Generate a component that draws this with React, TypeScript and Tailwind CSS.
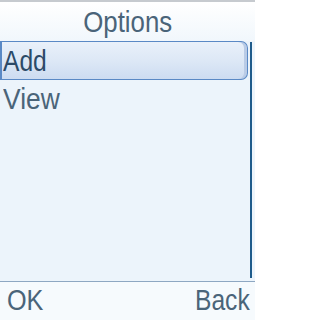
export default function App() {
  return (
    <div
      className="flex h-[320px] w-[255px] flex-col overflow-hidden bg-[#ecf4fb] text-[30px] leading-none"
      style={{ fontFamily: '"Liberation Sans", Arial, sans-serif' }}
    >
      <div className="h-[2px] bg-[#c6cacf]" />
      <div className="flex h-[39px] items-center justify-center bg-gradient-to-b from-[#ffffff] to-[#f1f7fc] text-[#4a6479]">
        <span className="inline-block origin-center scale-x-[0.86]">Options</span>
      </div>

      <div className="flex flex-1">
        <div className="flex flex-1 flex-col">
          <div className="flex h-[39px] items-center rounded-r-[7px] border border-l-2 border-[#5a89c5] bg-gradient-to-b from-[#e9f1fa] via-[#dde8f6] to-[#cddcf1] pl-[1px] text-[#2c4a68] shadow-[inset_-3px_0_0_#b9cbe6]">
            <span className="inline-block origin-left scale-x-[0.82]">Add</span>
          </div>
          <div className="flex h-[38px] items-center pl-[3px] text-[#4a6479]">
            <span className="inline-block origin-left scale-x-[0.88]">View</span>
          </div>
        </div>
        <div className="mb-[3px] ml-[2px] mr-[3px] mt-[1px] w-[2px] bg-[#1e5b8b]" />
      </div>

      <div className="h-px bg-[#8ea7c2]" />
      <div className="flex h-[38px] items-center justify-between bg-[#f6fafd] pb-[3px] pl-[7px] pr-[5px] text-[#4a6479]">
        <span className="inline-block origin-left scale-x-[0.84]">OK</span>
        <span className="inline-block origin-right scale-x-[0.82]">Back</span>
      </div>
    </div>
  )
}
